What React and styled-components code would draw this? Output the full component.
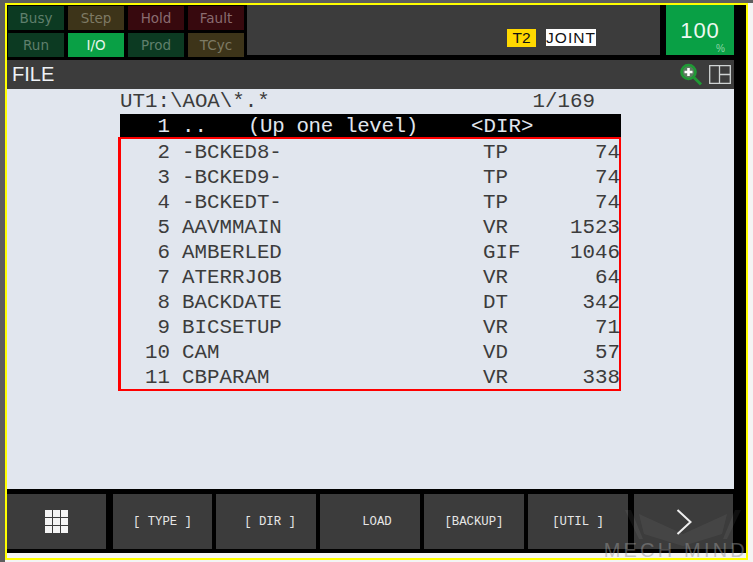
import React from 'react'
import styled, { createGlobalStyle } from 'styled-components'

const statusRows = [
  [
    { label: 'Busy', tone: 'green' },
    { label: 'Step', tone: 'amber' },
    { label: 'Hold', tone: 'red' },
    { label: 'Fault', tone: 'red' },
  ],
  [
    { label: 'Run', tone: 'green' },
    { label: 'I/O', tone: 'on' },
    { label: 'Prod', tone: 'green' },
    { label: 'TCyc', tone: 'amber' },
  ],
]

const files = [
  [2, '-BCKED8-', 'TP', 74],
  [3, '-BCKED9-', 'TP', 74],
  [4, '-BCKEDT-', 'TP', 74],
  [5, 'AAVMMAIN', 'VR', 1523],
  [6, 'AMBERLED', 'GIF', 1046],
  [7, 'ATERRJOB', 'VR', 64],
  [8, 'BACKDATE', 'DT', 342],
  [9, 'BICSETUP', 'VR', 71],
  [10, 'CAM', 'VD', 57],
  [11, 'CBPARAM', 'VR', 338],
]

const softKeys = [
  { label: '[ TYPE ]', shift: 0 },
  { label: '[ DIR ]', shift: 8 },
  { label: 'LOAD', shift: 14 },
  { label: '[BACKUP]', shift: 0 },
  { label: '[UTIL ]', shift: 0 },
]

const App = () => {
  return (
    <Screen>
      <GlobalStyle />
      <Frame>
        <Header>
          <StatusGrid>
            {statusRows.flat().map((s) => (
              <StatusCell key={s.label} $tone={s.tone}>{s.label}</StatusCell>
            ))}
          </StatusGrid>
          <ModePanel>
            <T2Badge>T2</T2Badge>
            <JointBadge>JOINT</JointBadge>
          </ModePanel>
          <Override>
            <OverrideValue>100</OverrideValue>
            <OverrideUnit>%</OverrideUnit>
          </Override>
        </Header>
        <TitleBar>
          <Title>FILE</Title>
          <TitleIcons>
            <svg width="24" height="24" viewBox="0 0 24 24">
              <circle cx="9.5" cy="9" r="7" fill="#5d7a62" stroke="#1f9a35" strokeWidth="2.6" />
              <path d="M9.5 5v8M5.5 9h8" stroke="#ffffff" strokeWidth="2.6" />
              <path d="M15 14.5l7 7" stroke="#1f9a35" strokeWidth="3" />
            </svg>
            <svg width="22" height="19" viewBox="0 0 22 19">
              <path d="M.7.7h20.6v17.6H.7zM10.5.7v17.6M10.5 9.5h10.8" fill="none" stroke="#cfd3d3" strokeWidth="1.3" />
            </svg>
          </TitleIcons>
        </TitleBar>
        <Content>
          <Listing>
            <PathRow>
              <span>UT1:\AOA\*.*</span>
              <span>1/169</span>
            </PathRow>
            <ParentRow>
              <Index>1</Index>
              <ParentName>
                <span>..</span>
                <UpLabel>(Up one level)</UpLabel>
              </ParentName>
              <span>&lt;DIR&gt;</span>
            </ParentRow>
            <Selection>
              {files.map(([n, name, type, size]) => (
                <FileRow key={n}>
                  <Index>{n}</Index>
                  <span>{name}</span>
                  <span>{type}</span>
                  <Size>{size}</Size>
                </FileRow>
              ))}
            </Selection>
          </Listing>
        </Content>
        <SoftKeys>
          <SoftKey>
            <svg width="23" height="23" viewBox="0 0 23 23" fill="#f4f4f4">
              {[0, 8, 16].flatMap((y) =>
                [0, 8, 16].map((x) => <rect key={`${x}-${y}`} x={x} y={y} width="7" height="7" />)
              )}
            </svg>
          </SoftKey>
          {softKeys.map((k) => (
            <SoftKey key={k.label} $shift={k.shift}>{k.label}</SoftKey>
          ))}
          <SoftKey>
            <svg width="16" height="26" viewBox="0 0 16 26">
              <path d="M1.5 1l13 12-13 12" fill="none" stroke="#eeeeee" strokeWidth="2" />
            </svg>
          </SoftKey>
        </SoftKeys>
        <BottomStrip />
        <WatermarkLogo width="116" height="36" viewBox="0 0 116 36">
          <path d="M0 0h6l12 29h-4zM116 0h-6L98 29h4z" fill="rgba(255,255,255,0.06)" />
          <path d="M14 4l44 20 44-20-5 20-39 12-39-12z" fill="rgba(255,255,255,0.05)" />
        </WatermarkLogo>
        <Watermark>MECH MIND</Watermark>
      </Frame>
    </Screen>
  )
}

const GlobalStyle = createGlobalStyle`
  html, body {
    margin: 0;
    padding: 0;
    background: #f4f4f4;
  }
`

const Screen = styled.div`
  width: 753px;
  height: 562px;
  box-sizing: border-box;
  border-top: 3px solid #5e5e5e;
  border-left: 5px solid #5e5e5e;
  overflow: hidden;
  background: #f4f4f4;
`

const Frame = styled.div`
  position: relative;
  width: 743px;
  height: 557px;
  box-sizing: border-box;
  border: 2px solid #ffff00;
  background: #000;
  padding-right: 12px;
  display: flex;
  flex-direction: column;
`

const Header = styled.div`
  display: flex;
  height: 52px;
  gap: 6px;
`

const StatusGrid = styled.div`
  display: grid;
  grid-template-columns: repeat(4, 56px);
  grid-auto-rows: 24px;
  gap: 3px 4px;
  margin: 1px 0 0 1px;
`

const toneStyles = {
  green: 'background: #0c3a22; color: #5f7f6c;',
  amber: 'background: #3d3419; color: #7d7a64;',
  red: 'background: #37090e; color: #8a6c70;',
  on: 'background: #09a045; color: #e6f5ec;',
}

const StatusCell = styled.div`
  display: flex;
  align-items: center;
  justify-content: center;
  font: 13.5px 'DejaVu Sans', sans-serif;
  ${(p) => toneStyles[p.$tone]}
`

const ModePanel = styled.div`
  flex: 1;
  margin-left: -3px;
  height: 50px;
  background: #3c3c3c;
  display: flex;
  align-items: flex-start;
  padding: 24px 0 0 260px;
  box-sizing: border-box;
  gap: 10px;
`

const T2Badge = styled.span`
  height: 18px;
  width: 29px;
  background: #ffd800;
  color: #111;
  font: 15.5px/18px 'Liberation Sans', sans-serif;
  text-align: center;
`

const JointBadge = styled.span`
  height: 17px;
  width: 50px;
  background: #fff;
  color: #111;
  font: 15.5px/18px 'Liberation Sans', sans-serif;
  letter-spacing: 1px;
  text-align: center;
`

const Override = styled.div`
  width: 68px;
  height: 50px;
  background: #09a045;
  color: #eef8f1;
  position: relative;
  text-align: center;
`

const OverrideValue = styled.div`
  font: 22px/24px 'Liberation Sans', sans-serif;
  letter-spacing: 1px;
  padding-top: 14px;
`

const OverrideUnit = styled.span`
  position: absolute;
  right: 9px;
  bottom: 0;
  font: 10px/12px 'Liberation Sans', sans-serif;
  color: #8fd6a8;
`

const TitleBar = styled.div`
  margin-top: 3px;
  height: 29px;
  background: #3c3c3c;
  display: flex;
  align-items: center;
  justify-content: space-between;
  padding: 0 3px 0 5px;
`

const Title = styled.div`
  font: 20px/26px 'Liberation Sans', sans-serif;
  color: #eef2f6;
  padding-bottom: 2px;
`

const TitleIcons = styled.div`
  display: flex;
  align-items: center;
  gap: 6px;
`

const Content = styled.div`
  height: 400px;
  background: #e1e6ee;
  padding: 0 0 0 113px;
  box-sizing: border-box;
`

const Listing = styled.div`
  width: 501px;
  font: 20.8px/25px 'Liberation Mono', monospace;
  color: #3c3c3c;
  white-space: pre;
`

const PathRow = styled.div`
  display: flex;
  justify-content: space-between;
  padding-right: 26px;
  height: 25px;
`

const ParentRow = styled.div`
  display: grid;
  grid-template-columns: 50px 277px auto;
  column-gap: 12px;
  height: 23px;
  line-height: 25px;
  background: #000;
  color: #e1e6ee;
`

const ParentName = styled.span`
  display: flex;
  gap: 41px;
`

const UpLabel = styled.span`
  letter-spacing: -0.35px;
`

const Selection = styled.div`
  margin-left: -2px;
  width: 503px;
  height: 254px;
  box-sizing: border-box;
  border: solid #ff0000;
  border-width: 2px 2px 2px 3px;
  padding-top: 1px;
`

const FileRow = styled.div`
  display: grid;
  grid-template-columns: 49px 289px 1fr auto;
  column-gap: 12px;
  height: 25px;
  margin-right: -1px;
`

const Index = styled.span`
  text-align: right;
`

const Size = styled.span`
  text-align: right;
`

const SoftKeys = styled.div`
  margin-top: 5px;
  display: flex;
  gap: 4px;
  height: 55px;
`

const SoftKey = styled.div`
  width: 100px;
  padding-left: ${(p) => p.$shift || 0}px;
  box-sizing: border-box;
  background: #3c3c3c;
  color: #e6e6e6;
  display: flex;
  align-items: center;
  justify-content: center;
  font: 12.3px 'Liberation Mono', monospace;

  &:first-child {
    width: 99px;
  }
  &:nth-child(2) {
    width: 99px;
    margin-left: 3px;
  }
  &:last-child {
    width: 99px;
    margin-left: 2px;
  }
`

const BottomStrip = styled.div`
  margin: 4px -12px 0 0;
  height: 5px;
  background: #f4f4f4;
`

const WatermarkLogo = styled.svg`
  position: absolute;
  left: 618px;
  top: 505px;
  pointer-events: none;
`

const Watermark = styled.div`
  position: absolute;
  right: -2px;
  bottom: -1px;
  font: 20px/17px 'Liberation Sans', sans-serif;
  letter-spacing: 3.2px;
  color: rgba(150, 150, 150, 0.5);
  pointer-events: none;
`

export default App
